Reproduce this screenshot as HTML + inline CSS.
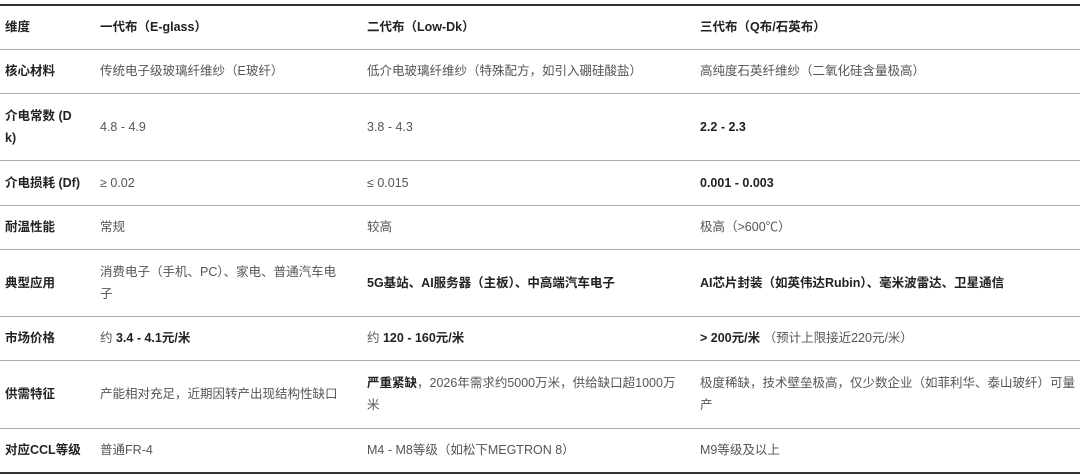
<!DOCTYPE html>
<html><head><meta charset="utf-8"><style>
html,body{margin:0;padding:0;background:#fff;width:1080px;height:476px;overflow:hidden}
table{position:absolute;left:0;top:4px;width:1080px;border-collapse:collapse;table-layout:fixed;font-family:"Liberation Sans","Noto Sans CJK SC",sans-serif;font-size:12.5px;color:#555;border-top:2px solid #333;border-bottom:2px solid #333}
td{padding:0 14px 0 5px;vertical-align:middle;line-height:22px;border-bottom:1px solid #aaa;word-break:break-all}
td:first-child{font-weight:bold;color:#222;padding-right:2px;white-space:nowrap}
td:last-child{padding-right:0}
tr.h td{font-weight:bold;color:#222}
b{color:#222}
</style></head><body>
<table>
<colgroup><col style="width:95px"><col style="width:267px"><col style="width:333px"><col style="width:385px"></colgroup>
<tr class="h" style="height:44px"><td>维度</td><td>一代布（E-glass）</td><td>二代布（Low-Dk）</td><td>三代布（Q布/石英布）</td></tr>
<tr style="height:44px"><td>核心材料</td><td>传统电子级玻璃纤维纱（E玻纤）</td><td>低介电玻璃纤维纱（特殊配方，如引入硼硅酸盐）</td><td>高纯度石英纤维纱（二氧化硅含量极高）</td></tr>
<tr style="height:67px"><td>介电常数 (D<br>k)</td><td>4.8 - 4.9</td><td>3.8 - 4.3</td><td><b>2.2 - 2.3</b></td></tr>
<tr style="height:45px"><td>介电损耗 (Df)</td><td>≥ 0.02</td><td>≤ 0.015</td><td><b>0.001 - 0.003</b></td></tr>
<tr style="height:44px"><td>耐温性能</td><td>常规</td><td>较高</td><td>极高（&gt;600℃）</td></tr>
<tr style="height:67px"><td>典型应用</td><td>消费电子（手机、PC）、家电、普通汽车电<br>子</td><td><b>5G基站、AI服务器（主板）、中高端汽车电子</b></td><td><b>AI芯片封装（如英伟达Rubin）、毫米波雷达、卫星通信</b></td></tr>
<tr style="height:44px"><td>市场价格</td><td>约 <b>3.4 - 4.1元/米</b></td><td>约 <b>120 - 160元/米</b></td><td><b>&gt; 200元/米</b> （预计上限接近220元/米）</td></tr>
<tr style="height:68px"><td>供需特征</td><td>产能相对充足，近期因转产出现结构性缺口</td><td><b>严重紧缺</b>，2026年需求约5000万米，供给缺口超1000万<br>米</td><td style="white-space:nowrap">极度稀缺，技术壁垒极高，仅少数企业（如菲利华、泰山玻纤）可量<br>产</td></tr>
<tr style="height:45px"><td>对应CCL等级</td><td>普通FR-4</td><td>M4 - M8等级（如松下MEGTRON 8）</td><td>M9等级及以上</td></tr>
</table>
</body></html>
